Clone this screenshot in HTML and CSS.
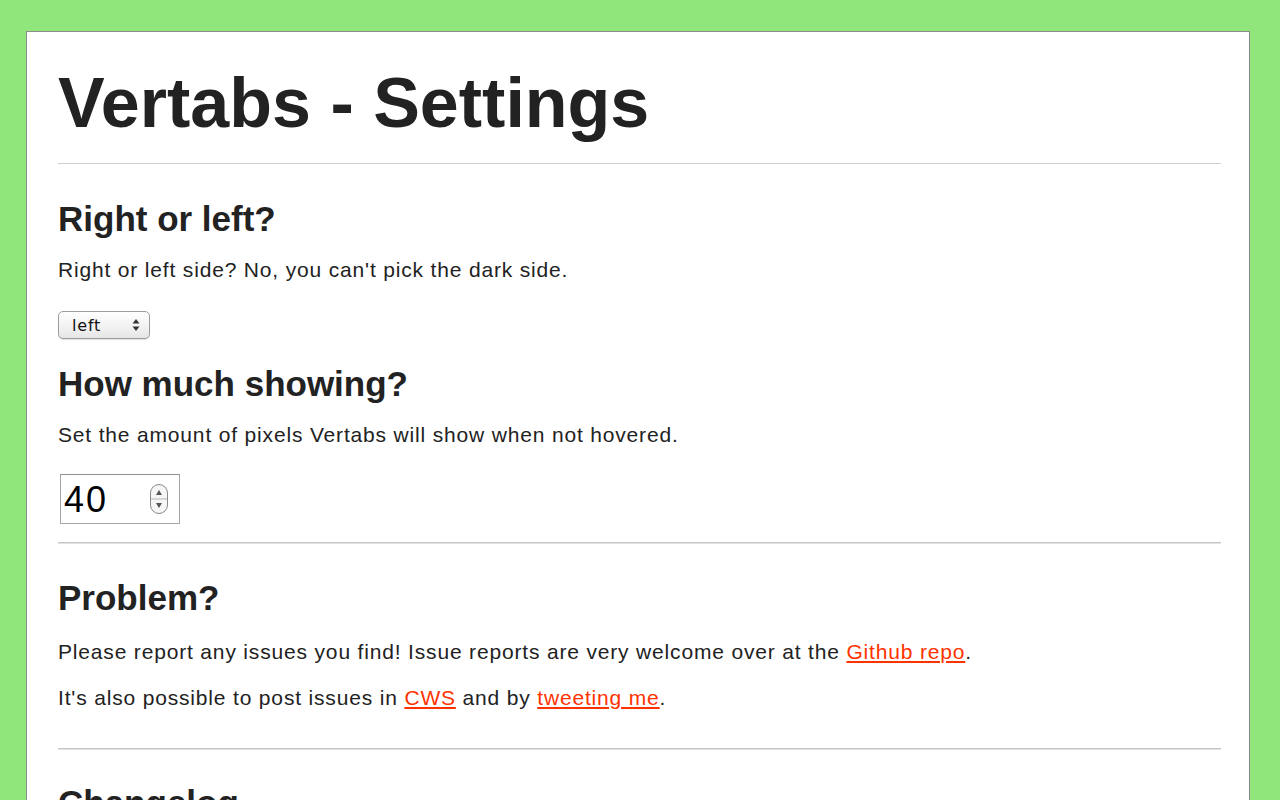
FILE: index.html
```html
<!DOCTYPE html>
<html>
<head>
<meta charset="utf-8">
<title>Vertabs - Settings</title>
<link rel="stylesheet" href="styles.css">
</head>
<body>
<div class="card">
  <h1 class="title">Vertabs - Settings</h1>
  <hr class="rule-thin">
  <h2 class="h-side">Right or left?</h2>
  <p class="p-side">Right or left side? No, you can't pick the dark side.</p>
  <div class="select-wrap">
    <select class="select">
      <option>left</option>
      <option>right</option>
    </select>
    <svg class="select-arrows" width="8" height="14" viewBox="0 0 8 14"><path d="M4 1 L7.5 5.5 H0.5 Z" fill="#333"/><path d="M4 13 L7.5 8.5 H0.5 Z" fill="#333"/></svg>
  </div>
  <h2 class="h-amount">How much showing?</h2>
  <p class="p-amount">Set the amount of pixels Vertabs will show when not hovered.</p>
  <div class="num-wrap">
    <input class="num" type="text" value="40">
    <svg class="spinner" width="20" height="32" viewBox="0 0 20 32"><rect x="1.5" y="1.5" width="17" height="29" rx="8.5" fill="#f6f6f6" stroke="#8a8a8a"/><line x1="2" y1="16" x2="18" y2="16" stroke="#b5b5b5"/><path d="M10 7 L13 12 H7 Z" fill="#555"/><path d="M10 25 L13 20 H7 Z" fill="#555"/></svg>
  </div>
  <hr class="rule rule-a">
  <h2 class="h-problem">Problem?</h2>
  <p class="p-problem1">Please report any issues you find! Issue reports are very welcome over at the <a href="#">Github repo</a>.</p>
  <p class="p-problem2">It's also possible to post issues in <a href="#">CWS</a> and by <a href="#">tweeting me</a>.</p>
  <hr class="rule rule-b">
  <h2 class="h-changelog">Changelog</h2>
</div>
</body>
</html>
```

FILE: styles.css
```css
html, body {
  margin: 0;
  padding: 0;
}
body {
  background: #90e57b;
  font-family: "Liberation Sans", Arial, Helvetica, sans-serif;
  color: #222;
  overflow: hidden;
  height: 800px;
}
.card {
  margin: 31px 30px 0 26px;
  background: #fff;
  border: 1px solid #8c8c8c;
  border-bottom: none;
  padding: 0 28px 40px 31px;
  min-height: 900px;
}
.title {
  margin: 33px 0 0;
  font-size: 70px;
  line-height: 77px;
  font-weight: bold;
  letter-spacing: 0;
}
hr {
  margin: 0;
  border: none;
}
.rule-thin {
  margin-top: 21px;
  height: 0;
  border-top: 1px solid #cfcfcf;
}
.rule {
  height: 0;
  border-top: 1px solid #c6c6c6;
  border-bottom: 1px solid #e2e2e2;
}
.rule-a { margin-top: 18px; }
.rule-b { margin-top: 37px; }
h2 {
  margin: 0;
  font-size: 35px;
  line-height: 42px;
  font-weight: bold;
}
p {
  margin: 0;
  font-size: 21px;
  line-height: 26px;
  letter-spacing: 0.83px;
}
a {
  color: #ff3300;
  text-decoration: underline;
}
.h-side { margin-top: 34px; }
.p-side { margin-top: 17px; }
.select-wrap {
  position: relative;
  margin-top: 28px;
  width: 92px;
  height: 28px;
}
.select {
  appearance: none;
  -webkit-appearance: none;
  width: 92px;
  height: 28px;
  margin: 0;
  padding: 0 0 0 13px;
  border: 1px solid #9d9d9d;
  border-radius: 5px;
  background: linear-gradient(#ffffff, #f1f1f1 60%, #e6e6e6);
  box-shadow: 0 1px 1px rgba(0,0,0,0.12);
  font-family: "DejaVu Sans", "Liberation Sans", sans-serif;
  font-size: 16px;
  letter-spacing: 0.8px;
  color: #111;
  outline: none;
}
.select-arrows {
  position: absolute;
  left: 74px;
  top: 7px;
  pointer-events: none;
}
.h-amount { margin-top: 24px; }
.p-amount { margin-top: 17px; }
.num-wrap {
  position: relative;
  margin: 26px 0 0 2px;
  width: 120px;
  height: 50px;
}
.num {
  box-sizing: border-box;
  width: 120px;
  height: 50px;
  margin: 0;
  padding: 2px 0 0 3px;
  border: 1px solid #a6a6a6;
  border-top-color: #8f8f8f;
  font-family: "Liberation Sans", Arial, sans-serif;
  font-size: 36px;
  letter-spacing: 2px;
  color: #000;
  background: #fff;
  outline: none;
}
.spinner {
  position: absolute;
  left: 89px;
  top: 9px;
  pointer-events: none;
}
.h-problem { margin-top: 33px; }
.p-problem1 { margin-top: 20px; }
.p-problem2 { margin-top: 20px; }
.h-changelog { margin-top: 32px; }
```
